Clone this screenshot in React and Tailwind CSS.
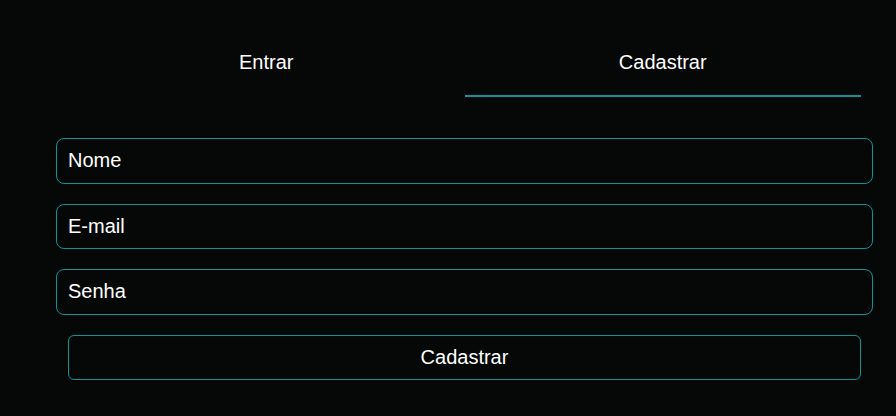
import { useState } from 'react';

export default function App() {
    const [tab, setTab] = useState('cadastrar');

    const fields = ['Nome', 'E-mail', 'Senha'];

    return (
        <div className="min-h-[416px] w-full bg-[#060808] text-white font-['Liberation_Sans',Arial,sans-serif] pl-[56px] pr-[23px] pt-7">
            {/* Tabs */}
            <div className="mx-3 flex">
                <button
                    onClick={() => setTab('entrar')}
                    className={`flex-1 pt-5 pb-[19px] text-[20px] leading-7 border-b-2 ${tab === 'entrar' ? 'border-[#0b9494]' : 'border-transparent'}`}
                >
                    Entrar
                </button>
                <button
                    onClick={() => setTab('cadastrar')}
                    className={`flex-1 pt-5 pb-[19px] text-[20px] leading-7 border-b-2 ${tab === 'cadastrar' ? 'border-[#0b9494]' : 'border-transparent'}`}
                >
                    Cadastrar
                </button>
            </div>

            {/* Form */}
            <form className="mt-[41px] flex flex-col gap-5" onSubmit={(e) => e.preventDefault()}>
                {fields.map((f) => (
                    <input
                        key={f}
                        type={f === 'Senha' ? 'password' : 'text'}
                        placeholder={f}
                        className="w-full h-[45.5px] pl-[11px] pr-3 bg-transparent border border-[#0b9494] rounded-lg text-[20px] leading-7 text-white placeholder-white outline-none"
                    />
                ))}
                <div className="px-3">
                    <button
                        type="submit"
                        className="w-full h-[45.5px] border border-[#0b9494] rounded-md text-[20px] leading-7"
                    >
                        Cadastrar
                    </button>
                </div>
            </form>
        </div>
    );
}
